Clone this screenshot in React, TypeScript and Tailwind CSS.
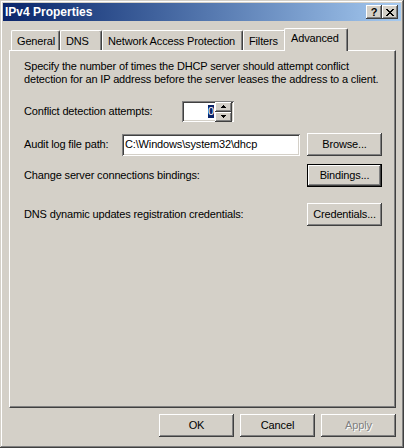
import React from "react";

const raised =
  "shadow-[inset_-1px_-1px_#404040,inset_1px_1px_#ffffff,inset_-2px_-2px_#808080,inset_2px_2px_#d4d0c8]";
const sunken =
  "shadow-[inset_1px_1px_#808080,inset_-1px_-1px_#ffffff,inset_2px_2px_#404040,inset_-2px_-2px_#d4d0c8]";

function Button({
  children,
  isDefault = false,
  disabled = false,
}: {
  children: React.ReactNode;
  isDefault?: boolean;
  disabled?: boolean;
}) {
  const label = disabled
    ? "text-[#808080] [text-shadow:1px_1px_0_#ffffff]"
    : "text-black";
  if (isDefault) {
    return (
      <div className="w-[75px] h-[23px] border border-black shrink-0">
        <div
          className={`w-full h-full flex items-center justify-center bg-[#d4d0c8] ${raised} ${label}`}
        >
          {children}
        </div>
      </div>
    );
  }
  return (
    <div
      className={`w-[75px] h-[23px] shrink-0 flex items-center justify-center bg-[#d4d0c8] ${raised} ${label}`}
    >
      {children}
    </div>
  );
}

function Tab({ width, children }: { width: number; children: React.ReactNode }) {
  return (
    <div
      className="h-[20px] pl-[5px] pt-[4px] leading-[13px] border-l border-t border-white rounded-tl-[2px] rounded-tr-[2px] border-r border-r-[#404040] shadow-[inset_-1px_0_#808080] bg-[#d4d0c8] whitespace-nowrap overflow-hidden"
      style={{ width }}
    >
      {children}
    </div>
  );
}

function TitleButton({ children }: { children: React.ReactNode }) {
  return (
    <div
      className={`w-[16px] h-[14px] bg-[#d4d0c8] flex items-center justify-center ${raised}`}
    >
      {children}
    </div>
  );
}

function Arrow({ up }: { up: boolean }) {
  return (
    <div className={`w-[17px] h-[10px] bg-[#d4d0c8] flex items-center justify-center ${raised}`}>
      <svg width="5" height="3" viewBox="0 0 5 3" shapeRendering="crispEdges">
        {up ? (
          <path d="M2 0h1v1h1v1h1v1H0V2h1V1h1z" fill="#000" />
        ) : (
          <path d="M0 0h5v1H4v1H3v1H2V2H1V1H0z" fill="#000" />
        )}
      </svg>
    </div>
  );
}

export default function App() {
  return (
    <div className="w-[404px] h-[448px] bg-[#d4d0c8] p-[3px] flex flex-col shadow-[inset_-1px_-1px_#404040,inset_1px_1px_#d4d0c8,inset_-2px_-2px_#808080,inset_2px_2px_#ffffff] font-['Liberation_Sans',Arial,sans-serif] text-[11px] tracking-[-0.15px] text-black">
      {/* title bar */}
      <div className="h-[18px] flex items-center pl-[2px] pr-[3px] bg-gradient-to-r from-[#0a246a] to-[#a6caf0]">
        <span className="text-white font-bold text-[12px] tracking-normal leading-[18px] flex-1">
          IPv4 Properties
        </span>
        <div className="flex">
          <TitleButton>
            <span className="font-bold text-[11px] leading-none mt-[1px]">?</span>
          </TitleButton>
          <TitleButton>
            <svg width="8" height="7" viewBox="0 0 8 7" shapeRendering="crispEdges">
              <path
                d="M0 0h2v1h1v1h2V1h1V0h2v1H7v1H6v1H5v1h1v1h1v1h1v1H6V6H5V5H3v1H2v1H0V6h1V5h1V4h1V3H2V2H1V1H0z"
                fill="#000"
              />
            </svg>
          </TitleButton>
        </div>
      </div>

      {/* tabs */}
      <div className="mt-[7px] ml-[6px] w-[387px] flex flex-col">
        <div className="flex items-end h-[22px] pl-[2px] relative z-10">
          <Tab width={49}>General</Tab>
          <Tab width={42}>DNS</Tab>
          <Tab width={141}>Network Access Protection</Tab>
          <Tab width={43}>Filters</Tab>
          <div className="w-[64px] h-[23px] -ml-[2px] -mb-[1px] pl-[6px] pt-[3px] leading-[13px] border-l border-t border-white rounded-tl-[2px] rounded-tr-[2px] border-r border-r-[#404040] shadow-[inset_-1px_0_#808080] bg-[#d4d0c8] whitespace-nowrap">
            Advanced
          </div>
        </div>

        {/* panel */}
        <div className="h-[358px] border-l border-t border-white border-r border-b border-r-[#404040] border-b-[#404040] shadow-[inset_-1px_-1px_#808080] pt-[9px] pl-[14px] pr-[13px] leading-[13px]">
          <p className="whitespace-nowrap">
            Specify the number of times the DHCP server should attempt conflict
            <br />
            detection for an IP address before the server leases the address to a client.
          </p>

          <div className="mt-[15px] h-[21px] flex items-center">
            <span className="w-[158px]">Conflict detection attempts:</span>
            <div className={`w-[52px] h-[21px] bg-white flex items-center p-[2px] ${sunken}`}>
              <div className="flex-1 flex justify-end pr-[1px]">
                <span className="bg-[#0a246a] text-white leading-[13px]">0</span>
              </div>
              <div className="flex flex-col">
                <Arrow up />
                <Arrow up={false} />
              </div>
            </div>
          </div>

          <div className="mt-[11px] h-[23px] flex items-center">
            <span className="w-[98px]">Audit log file path:</span>
            <div className={`w-[178px] h-[22px] bg-white flex items-center pl-[3px] ${sunken}`}>
              C:\Windows\system32\dhcp
            </div>
            <div className="flex-1" />
            <Button>Browse...</Button>
          </div>

          <div className="mt-[8px] h-[23px] flex items-center justify-between">
            <span>Change server connections bindings:</span>
            <Button isDefault>Bindings...</Button>
          </div>

          <div className="mt-[16px] h-[23px] flex items-center justify-between">
            <span>DNS dynamic updates registration credentials:</span>
            <Button>Credentials...</Button>
          </div>
        </div>

        {/* dialog buttons */}
        <div className="mt-[6px] flex justify-end gap-[6px]">
          <Button>OK</Button>
          <Button>Cancel</Button>
          <Button disabled>Apply</Button>
        </div>
      </div>
    </div>
  );
}
